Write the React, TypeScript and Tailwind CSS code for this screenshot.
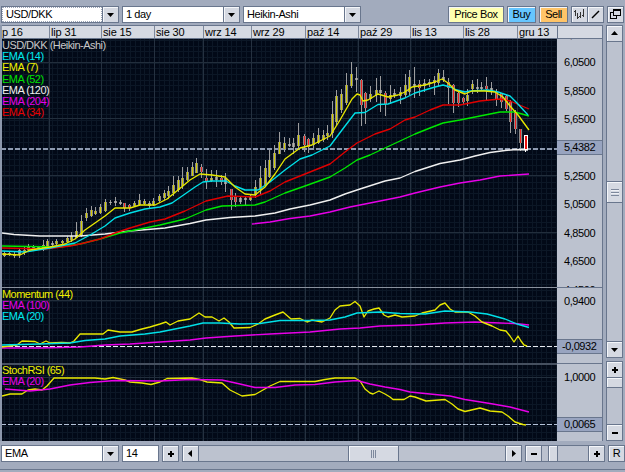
import type { ReactNode } from "react";
import clsx from "clsx";
import { twMerge } from "tailwind-merge";

type Candle = [x: number, high: number, low: number, top: number, bottom: number, kind?: "r" | "g"];

// plot units are window pixels, the plot starts at (2, 39)
const CANDLES: Candle[] = [
  [4, 251, 257, 253, 256], [9, 252, 256, 253, 254, "g"], [14, 251, 258, 254, 256], [19, 249, 258, 250, 255, "g"],
  [24, 246, 255, 250, 253], [28, 244, 252, 246, 250], [33, 245, 250, 247, 249, "g"], [38, 246, 250, 247, 249, "g"],
  [43, 240, 251, 245, 249], [47, 239, 248, 241, 247], [52, 241, 246, 243, 245, "g"], [56, 239, 245, 241, 244],
  [62, 240, 244, 241, 243], [67, 236, 243, 238, 242], [71, 232, 242, 236, 240], [76, 222, 238, 231, 238],
  [81, 215, 237, 221, 236], [86, 208, 221, 213, 218], [91, 206, 217, 210, 216], [95, 207, 215, 211, 214],
  [100, 204, 214, 207, 213], [105, 199, 212, 202, 211], [110, 200, 205, 202, 203, "g"], [115, 197, 206, 201, 203, "g"],
  [120, 200, 205, 202, 204, "g"], [124, 203, 212, 203, 208, "r"], [129, 204, 211, 205, 208, "r"], [134, 201, 207, 203, 206],
  [139, 194, 206, 200, 205], [144, 199, 205, 201, 204], [149, 201, 208, 203, 206, "g"], [153, 198, 206, 201, 205],
  [159, 194, 203, 196, 201], [164, 190, 200, 193, 198], [168, 186, 199, 191, 196], [173, 176, 196, 185, 193],
  [178, 176, 192, 180, 190], [182, 167, 189, 178, 186], [187, 167, 181, 172, 180], [192, 162, 176, 167, 176],
  [196, 158, 173, 163, 173], [201, 164, 178, 167, 172, "r"], [206, 169, 189, 178, 181, "r"], [211, 170, 182, 178, 181],
  [216, 170, 187, 177, 180, "g"], [221, 175, 185, 178, 182, "r"], [225, 173, 192, 178, 184, "g"], [231, 189, 210, 189, 200, "r"],
  [235, 193, 207, 197, 202, "r"], [240, 196, 204, 198, 202, "g"], [245, 196, 205, 198, 200, "g"], [250, 195, 201, 197, 200],
  [255, 180, 198, 187, 195], [260, 166, 195, 178, 190], [265, 160, 187, 168, 185], [269, 150, 178, 160, 177],
  [274, 145, 170, 153, 168], [279, 132, 154, 142, 154], [284, 137, 152, 143, 149], [289, 138, 147, 144, 146, "g"],
  [293, 138, 154, 143, 147, "g"], [298, 123, 148, 135, 146], [304, 134, 152, 136, 145, "r"], [308, 138, 153, 139, 147, "r"],
  [313, 133, 148, 138, 145], [318, 128, 144, 135, 143], [323, 130, 142, 135, 140], [327, 125, 140, 133, 136],
  [332, 101, 138, 114, 133], [336, 90, 126, 96, 122], [341, 89, 113, 94, 110], [346, 73, 105, 85, 103],
  [351, 62, 88, 74, 86], [356, 67, 92, 78, 80, "g"], [361, 79, 126, 80, 105, "r"], [365, 92, 124, 93, 108, "r"],
  [370, 86, 102, 94, 99], [376, 78, 102, 90, 95], [380, 76, 112, 90, 93, "g"], [385, 91, 116, 93, 104, "r"],
  [390, 85, 104, 95, 99], [394, 89, 98, 93, 96, "g"], [400, 87, 104, 92, 96], [405, 74, 98, 85, 95],
  [409, 70, 95, 77, 92], [414, 67, 98, 84, 87, "g"], [419, 80, 96, 84, 88, "r"], [424, 79, 92, 83, 86, "g"],
  [429, 79, 87, 82, 84, "g"], [434, 76, 95, 80, 83], [438, 69, 86, 73, 83], [443, 70, 82, 77, 80, "g"],
  [448, 78, 104, 82, 88, "r"], [453, 84, 113, 85, 103, "r"], [458, 92, 107, 93, 103, "r"], [463, 97, 105, 98, 102, "r"],
  [467, 89, 106, 95, 101], [472, 80, 94, 84, 89], [477, 79, 93, 87, 89, "g"], [481, 82, 91, 87, 89, "g"],
  [486, 77, 100, 86, 89, "r"], [491, 82, 95, 88, 91, "g"], [496, 89, 106, 92, 100, "r"], [501, 93, 108, 93, 102, "r"],
  [506, 95, 111, 96, 109, "r"], [510, 100, 133, 102, 122, "r"], [515, 110, 134, 112, 129, "r"], [520, 129, 151, 129, 143, "r"],
];

const LINES = [
  // price averages
  { color: "#f0f0f0", points: "2,233 14,234.5 40,236 80,236 105,234 130,231 165,228 190,223.5 206,220 230,217.5 255,216 275,213 290,209 310,205 330,200 345,194 360,189 385,181 400,178 415,171.5 440,163.5 460,160 475,156 490,152.5 505,150.5 516,149.5 528,150" },
  { color: "#e800e8", points: "252,224 270,222 290,218.5 310,216 330,212 350,207 375,202 400,197 415,193 440,187 460,183 480,180 500,176 515,175 529,174" },
  { color: "#00e800", points: "2,246 60,247 80,244 100,239 120,233 140,229 160,225 185,219 206,210 222,206 255,205 265,202 285,193 305,186 330,177 345,168 357,160 370,155 385,148 400,141 415,134 430,128 443,123 460,120 485,115 500,112 515,112 529,116" },
  { color: "#e00000", points: "2,248 45,249 70,246 80,244 100,239 115,233 130,228 150,222 165,219 185,211 206,201 228,196 255,197 270,191 285,182 305,174 330,164 345,152 357,143 375,134 390,129 405,120 415,117 430,110 443,105 460,105 480,101 500,99 510,101 529,109" },
  { color: "#00e0e8", points: "2,251 25,252 50,248 75,243 90,235 105,226 115,218 130,213 145,209 160,207 172,203 185,194 195,187 203,182 212,181 226,181 235,186 245,190 258,190 270,182 285,170 300,159 312,155 330,146 342,130 355,113 365,112.5 378,104.5 388,104 405,98 415,93 425,90 435,87 443,85 450,87 457,90 465,92 470,91 488,90 498,92 510,96 517,103 528,115" },
  { color: "#e8e800", points: "2,254 20,255 30,250 50,247 65,244 75,239 85,230 95,223 105,216 115,208 130,208 140,205 155,205 167,199 178,190 190,180 200,174 212,175 225,177 235,187 245,194 255,195 265,187 275,174 285,159 300,148 312,145 330,136 340,120 352,99 357,94 360,95 363,101 368,100 378,94 388,97 398,95 405,92 412,87 425,85 435,82 442,79 448,83 455,90 465,94 472,91 485,91 495,92 503,97 510,106 518,115 529,130" },
  // momentum
  { color: "#e800e8", points: "2,348 40,348 80,347 105,345 130,344 160,342 190,340 206,338 235,336 270,334 310,332 340,329 360,328 380,326 415,325 445,323 475,322 500,323 515,323.5 529,325" },
  { color: "#e8e800", points: "2,347 17,345 22,341 35,341.5 40,344 46,341 50,343 62,342.5 70,343 74,341 80,334 103,334 108,330 120,332 132,332 140,329.5 150,327 160,324 166,322 170,325 178,321 190,319 199,313 205,317 212,317 219,321 224,318 229,322 234,328 250,327.5 258,324 265,319 275,315 283,312 291,319 300,318.5 307,322 312,320 322,322 330,318 335,310 340,306 350,305 355,301.5 360,306 364,317 368,311 374,309 379,308 384,315 388,317 395,315 402,317 415,316 422,313 435,310 440,305 445,303 450,309 455,312 468,312 475,316 482,322 492,326 500,330 506,331 510,336 514,342 518,336 521,341 524,345 527,346" },
  { color: "#00e0e8", points: "2,345 40,344 70,343 85,340.5 105,339 120,336 145,334 160,332 175,329 190,326 203,323 220,323 240,324 260,323.5 280,320.5 310,320.5 330,320 345,317 357,313 380,312 400,313.5 425,314 445,311 470,312 487,314 505,319 517,324 529,327.5" },
  // stochastic rsi
  { color: "#e8e800", points: "2,396 10,394 22,394 28,390 35,389 42,390 47,386 54,378 95,378 105,379 113,377.5 125,380 130,382 142,383 151,384.5 160,382 167,378.5 192,378 200,379.5 207,382 222,383 230,390 242,396 255,394.5 263,390 270,386 280,381.5 315,381.5 325,379.5 335,378 355,378 360,381 365,389 370,393 373,394 379,391 385,394 390,397 393,399.5 404,399.5 410,396 415,397 426,401 445,399.5 452,404 458,409 465,411.5 480,408 490,411 502,412 508,416 515,422 523,424.5 526,425" },
  { color: "#e800e8", points: "5,389 30,391 50,389 70,385 90,382.5 115,380.5 160,381 190,379.5 222,380 240,384 255,387.5 275,387.5 295,385 315,384.5 335,382 357,380.5 370,384 385,387 400,389.5 410,392 430,394 450,396 465,399.5 490,403.5 510,407 529,412" },
];

const MAJOR_X = [49, 101, 154, 203, 251, 305, 358, 410, 463, 517];
const MINOR_X = Array.from({ length: 115 }, (_, i) => Math.round(4 + i * 4.84));
const MINOR_Y = Array.from({ length: 71 }, (_, i) => Math.round(40 + i * 5.68));
const MAJOR_Y = [63, 119, 176, 233, 301, 378];

const DATES = [
  { label: "p 16", width: "w-[47px]" },
  { label: "lip 31", width: "w-[52px]" },
  { label: "sie 15", width: "w-[53px]" },
  { label: "sie 30", width: "w-[49px]" },
  { label: "wrz 14", width: "w-[48px]" },
  { label: "wrz 29", width: "w-[54px]" },
  { label: "paź 14", width: "w-[53px]" },
  { label: "paź 29", width: "w-[52px]" },
  { label: "lis 13", width: "w-[53px]" },
  { label: "lis 28", width: "w-[54px]" },
  { label: "gru 13", width: "w-[40px]" },
];

const PRICES = ["6,2500", "6,0500", "5,8500", "5,6500", "5,4382", "5,2500", "5,0500", "4,8500", "4,6500", "4,4500"];

const FACE = "border border-[#69768d] bg-[#d5d9e2] shadow-[inset_1px_1px_0_#f4f6fa]";

function Arrow({ dir }: { dir: "up" | "down" | "left" | "right" }) {
  const d = { up: "M0 5 3.5 1 7 5z", down: "M0 2h7L3.5 6z", left: "M5 0v7L1 3.5z", right: "M2 0v7l4-3.5z" }[dir];
  return (
    <svg width="7" height="7" viewBox="0 0 7 7">
      <path d={d} />
    </svg>
  );
}

function Sign({ plus }: { plus?: boolean }) {
  return (
    <svg width="6" height="6" viewBox="0 0 6 6" shapeRendering="crispEdges">
      <path d={plus ? "M0 2h6v2h-6zM2 0h2v6h-2z" : "M0 2h6v2h-6z"} />
    </svg>
  );
}

function Btn({ children, className }: { children?: ReactNode; className?: string }) {
  return <div className={twMerge("flex shrink-0 items-center justify-center", FACE, className)}>{children}</div>;
}

function Combo({ value, focused }: { value: string; focused?: boolean }) {
  return (
    <div className="flex h-[17px] w-[118px] shrink-0">
      <div className="flex-1 border border-r-0 border-[#69768d] bg-white">
        <div className={clsx("flex h-full items-center pl-[3px]", focused && "border border-dotted border-[#9aa3b5] pl-[2px]")}>
          {value}
        </div>
      </div>
      <Btn className="w-[17px]">
        <Arrow dir="down" />
      </Btn>
    </div>
  );
}

function Chart() {
  return (
    <svg className="block" width="555" height="402" viewBox="2 39 555 402" shapeRendering="crispEdges">
      <rect x="2" y="39" width="555" height="402" fill="#020917" />
      {MINOR_X.map((x) => (
        <rect key={x} x={x} y="39" width="1" height="402" fill="#0c1726" />
      ))}
      {MINOR_Y.map((y) => (
        <rect key={y} x="2" y={y} width="555" height="1" fill="#0c1726" />
      ))}
      {MAJOR_X.map((x) => (
        <rect key={x} x={x} y="39" width="1" height="402" fill="#253140" />
      ))}
      {MAJOR_Y.map((y) => (
        <rect key={y} x="2" y={y - 1} width="555" height="1" fill="#222e3c" />
      ))}
      <rect x="2" y="287" width="555" height="1" fill="#8a919d" />
      <rect x="2" y="363" width="555" height="2" fill="#465060" />
      <g strokeDasharray="5 2" strokeDashoffset="1">
        <line x1="2" x2="557" y1="149" y2="149" stroke="#8e9ab0" strokeWidth="2" />
        <line x1="2" x2="557" y1="346.5" y2="346.5" stroke="#e6eaf0" />
        <line x1="2" x2="557" y1="424.5" y2="424.5" stroke="#b4c2d8" />
      </g>
      {CANDLES.map(([x, high, low, top, bottom, kind]) => (
        <g key={x}>
          <rect x={x} y={high} width="1" height={low - high} fill="#9c9c9e" />
          <rect x={x - 1} y={top} width="3" height={bottom - top} fill="#8c8a88" />
          <rect x={x} y={top} width="1" height={bottom - top} fill={kind === "r" ? "#f02020" : kind === "g" ? "#b0b0b0" : "#d0cc00"} />
        </g>
      ))}
      <g shapeRendering="auto" fill="none" strokeWidth="1.35" strokeLinejoin="round">
        {LINES.map((l) => (
          <polyline key={l.points} points={l.points} stroke={l.color} />
        ))}
      </g>
      <rect x="524" y="135" width="4" height="15" fill="#fff" />
      <rect x="525" y="136" width="2" height="13" fill="#e81010" />
      <rect x="525" y="150" width="1" height="2" fill="#fff" />
    </svg>
  );
}

function Legend({ className, items }: { className: string; items: [string, string][] }) {
  return (
    <div className={clsx("absolute left-0 leading-[11.2px] tracking-[-0.54px]", className)}>
      {items.map(([text, color]) => (
        <div key={text} className={color}>{text}</div>
      ))}
    </div>
  );
}

function PriceTag({ children }: { children: string }) {
  return (
    <div className="flex h-[15px] w-full items-center border-y border-[#69768d] bg-[#98a4c0] pl-[7px]">{children}</div>
  );
}

function Axis() {
  return (
    <div className="flex h-[402px] w-[46px] flex-col border-r border-[#69768d] bg-[#bcc2cf]">
      <div className="h-[249px] shrink-0 overflow-hidden border-b border-[#69768d]">
        <div className="-mt-[19px]">
          {PRICES.map((p) => (
            <div key={p} className="flex h-[28.45px] items-center">
              {p === "5,4382" ? <PriceTag>{p}</PriceTag> : <span className="pl-[7px]">{p}</span>}
            </div>
          ))}
        </div>
      </div>
      <div className="h-[76px] shrink-0 border-b border-[#69768d] pt-[6px]">
        <div className="h-[14px] pl-[7px] leading-[14px]">0,9400</div>
        <div className="mt-[31px] flex h-[15px] items-center border-y border-[#69768d] bg-[#98a4c0] pl-[5px]">-0,0932</div>
      </div>
      <div className="pt-[6px]">
        <div className="h-[14px] pl-[7px] leading-[14px]">1,0000</div>
        <div className="mt-[33px]">
          <PriceTag>0,0065</PriceTag>
        </div>
      </div>
    </div>
  );
}

export default function App() {
  return (
    <div className="flex h-[472px] w-[625px] flex-col overflow-hidden bg-[#a2abbd] font-['Liberation_Sans',Arial,sans-serif] text-[11px] leading-none tracking-[-0.4px] whitespace-nowrap text-black">
      <div className="flex h-[25px] shrink-0 items-start gap-[3px] pt-[6px] pl-px">
        <Combo value="USD/DKK" focused />
        <Combo value="1 day" />
        <Combo value="Heikin-Ashi" />
        <div className="ml-[84px] flex h-[17px] gap-[3px]">
          <Btn className="w-[56px] bg-[#ffffb0]">Price Box</Btn>
          <Btn className="w-[29px] bg-[#66c6ff]">Buy</Btn>
          <Btn className="w-[29px] bg-[#ffc468]">Sell</Btn>
          <div className="flex">
            <Btn className="w-[17px]">
              <svg width="11" height="11" viewBox="0 0 11 11" shapeRendering="crispEdges" fill="none" stroke="#333">
                <path d="M1.5 1v6M0 2.5h1M3.5 4v6M4 8.5h1M6.5 3v6M5 7.5h1M9.5 0v8M8 6.5h1" />
              </svg>
            </Btn>
            <Btn className="-ml-px w-[17px]">
              <svg width="9" height="9" viewBox="0 0 9 9" stroke="#000" strokeWidth="1.4">
                <path d="M1 8 8 1" />
              </svg>
            </Btn>
          </div>
          <Btn className="w-[17px]">
            <svg width="11" height="11" viewBox="0 0 11 11" shapeRendering="crispEdges" fill="#d5d9e2" stroke="#000">
              <path d="M0.5 3.5h6v6h-6z" />
              <path d="M3.5 0.5h7v6h-7zM3 1.5h8" />
            </svg>
          </Btn>
        </div>
      </div>

      <div className="flex h-[416px] shrink-0">
        <div className="flex w-[603px] flex-col border-l-2 border-[#8d98ac]">
          <div className="flex h-[14px] shrink-0 border-y border-[#69768d] bg-[#d5d9e2] tracking-[-0.15px]">
            {DATES.map((d, i) => (
              <div key={d.label} className={clsx("flex shrink-0 items-center", d.width, i ? "border-l border-[#7d889c] pl-px" : "pl-0")}>
                {d.label}
              </div>
            ))}
            <div className="flex-1 border-x border-[#69768d]" />
          </div>
          <div className="flex">
            <div className="relative w-[555px] shrink-0">
              <Chart />
              <Legend
                className="top-px"
                items={[
                  ["USD/DKK (Heikin-Ashi)", "text-[#c8c8c8]"],
                  ["EMA (14)", "text-[#00e8f0]"],
                  ["EMA (7)", "text-[#f0f000]"],
                  ["EMA (52)", "text-[#00e000]"],
                  ["EMA (120)", "text-[#f0f0f0]"],
                  ["EMA (204)", "text-[#e800e8]"],
                  ["EMA (34)", "text-[#e80000]"],
                ]}
              />
              <Legend
                className="top-[250px]"
                items={[
                  ["Momentum (44)", "text-[#f0f000]"],
                  ["EMA (100)", "text-[#e800e8]"],
                  ["EMA (20)", "text-[#00e8f0]"],
                ]}
              />
              <Legend
                className="top-[326px]"
                items={[
                  ["StochRSI (65)", "text-[#f0f000]"],
                  ["EMA (20)", "text-[#e800e8]"],
                ]}
              />
            </div>
            <Axis />
          </div>
        </div>

        <div className="ml-[3px] flex w-[17px] flex-col">
          <div className="flex h-[334px] flex-col border border-[#69768d] bg-[#bcc2cf]">
            <Btn className="-m-px h-[17px]"><Arrow dir="up" /></Btn>
            <Btn className="-mx-px mt-[140px] mb-auto h-[22px]">
              <span className="h-[7px] w-[8px] bg-[repeating-linear-gradient(#7d889c_0_1px,#eef0f5_1px_2px,#d5d9e2_2px_3px)]" />
            </Btn>
            <Btn className="-m-px h-[17px]"><Arrow dir="down" /></Btn>
          </div>
          <div className="mt-[3px] flex h-[80px] flex-col border border-[#69768d] bg-[#bcc2cf]">
            <Btn className="-m-px h-[17px]"><Sign plus /></Btn>
            <Btn className="-mx-px h-[11px]" />
            <Btn className="-m-px mt-auto h-[17px]"><Sign /></Btn>
          </div>
        </div>
      </div>

      <div className="mt-[4px] flex h-[17px] shrink-0 gap-[3px] pl-px">
        <Combo value="EMA" />
        <div className="flex w-[37px] items-center border border-[#69768d] bg-white pl-[3px]">14</div>
        <Btn className="w-[17px]"><Sign plus /></Btn>
        <div className="flex w-[340px] justify-between border border-[#69768d] bg-[#bcc2cf]">
          <Btn className="-m-px w-[17px]"><Arrow dir="left" /></Btn>
          <div className="flex w-[306px] pl-[149px]">
            <Btn className="-my-px w-[51px]">
              <span className="h-[8px] w-[6px] bg-[repeating-linear-gradient(90deg,#7d889c_0_1px,#d5d9e2_1px_2px)]" />
            </Btn>
          </div>
          <Btn className="-m-px w-[17px]"><Arrow dir="right" /></Btn>
        </div>
        <div className="flex w-[80px] border border-[#69768d] bg-[#bcc2cf]">
          <Btn className="-m-px w-[17px]"><Sign /></Btn>
          <Btn className="-my-px ml-[7px] w-[10px]" />
          <Btn className="-m-px ml-auto w-[17px]"><Sign plus /></Btn>
        </div>
        <Btn className="w-[17px]">R</Btn>
      </div>
      <div className="mt-[7px] h-px shrink-0 bg-[#69768d]" />
    </div>
  );
}
